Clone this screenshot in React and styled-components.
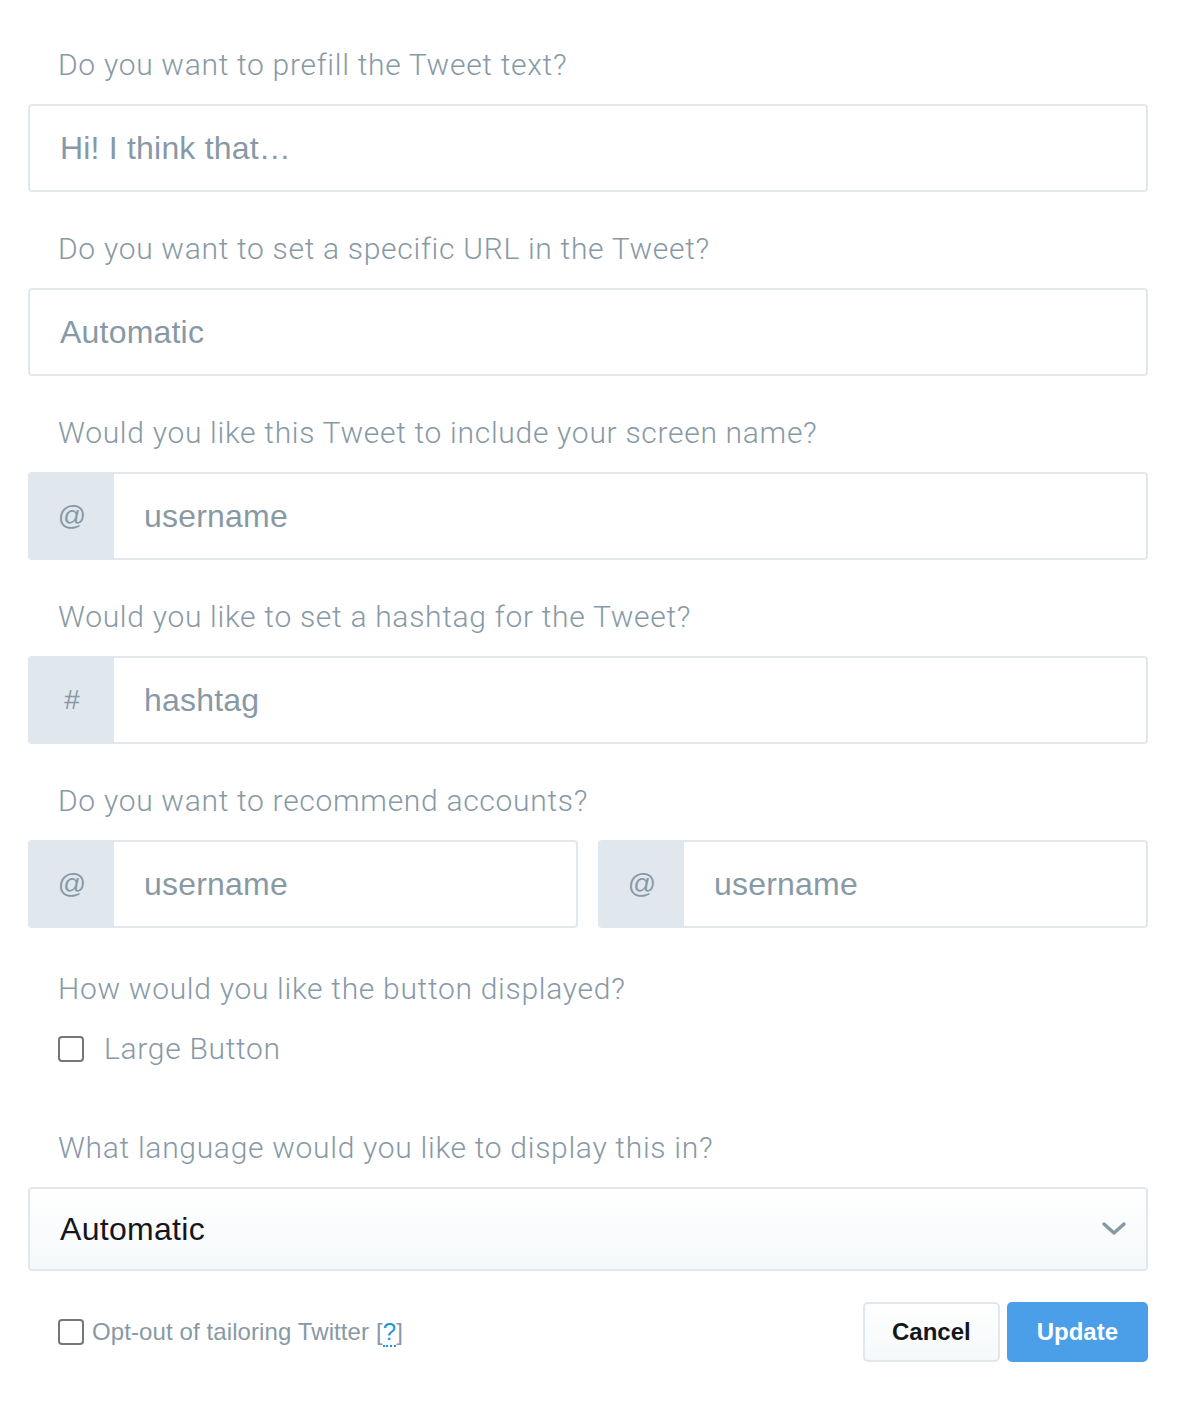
import styled, { createGlobalStyle } from "styled-components";

const GlobalStyle = createGlobalStyle`
  body {
    margin: 0;
    background: #fff;
    font-family: "Liberation Sans", Arial, sans-serif;
  }
`;

const Page = styled.div`
  width: 1120px;
  padding: 47px 28px 40px 28px;
  display: flex;
  flex-direction: column;
`;

const Section = styled.div`
  display: flex;
  flex-direction: column;
  margin-bottom: ${(p) => p.$gap ?? 39}px;
`;

const Label = styled.div`
  font-family: Roboto, "Liberation Sans", sans-serif;
  font-weight: 300;
  font-size: 30px;
  letter-spacing: 0.7px;
  line-height: 36px;
  color: #8899a6;
  padding-left: 30px;
  margin-bottom: ${(p) => p.$gap ?? 21}px;
`;

const Row = styled.div`
  display: grid;
  grid-template-columns: 1fr 1fr;
  gap: 20px;
`;

const InputBox = styled.div`
  display: flex;
  height: 88px;
  box-sizing: border-box;
  border: 2px solid #e1e8ed;
  border-radius: 4px;
  overflow: hidden;
  background: #fff;
`;

const Addon = styled.div`
  width: 84px;
  flex-shrink: 0;
  background: #e1e8ed;
  color: #8899a6;
  font-size: 28px;
  display: flex;
  align-items: center;
  justify-content: center;
`;

const Field = styled.div`
  flex: 1;
  display: flex;
  align-items: center;
  padding-left: 30px;
  font-size: 32px;
  letter-spacing: 0.2px;
  color: #8899a6;
`;

const CheckRow = styled.label`
  display: flex;
  align-items: center;
  gap: 20px;
  padding-left: 30px;
  font-family: Roboto, "Liberation Sans", sans-serif;
  font-weight: 300;
  font-size: 30px;
  letter-spacing: 0.7px;
  color: #8899a6;
`;

const Box = styled.span`
  width: 22px;
  height: 22px;
  border: 2px solid #767676;
  border-radius: 4px;
  flex-shrink: 0;
  box-sizing: content-box;
`;

const Select = styled.div`
  height: 84px;
  box-sizing: border-box;
  border: 2px solid #e1e8ed;
  border-radius: 4px;
  background: linear-gradient(#fff, #f5f8fa);
  display: flex;
  align-items: center;
  justify-content: space-between;
  padding: 0 18px 0 30px;
  font-size: 32px;
  letter-spacing: 0.3px;
  color: #14171a;
`;

const Footer = styled.div`
  display: flex;
  align-items: center;
  justify-content: space-between;
  margin-top: 31px;
`;

const OptOut = styled.div`
  display: flex;
  align-items: center;
  gap: 8px;
  padding-left: 30px;
  font-size: 24px;
  letter-spacing: 0.1px;
  color: #8899a6;
`;

const Help = styled.span`
  color: #1b95e0;
  border-bottom: 2px dotted #1b95e0;
  line-height: 24px;
`;

const Buttons = styled.div`
  display: flex;
  gap: 7px;
`;

const Button = styled.button`
  height: 60px;
  padding: 0 ${(p) => (p.$primary ? 28 : 27)}px;
  border-radius: 5px;
  font-family: "Liberation Sans", Arial, sans-serif;
  font-weight: 700;
  font-size: 24px;
  border: 2px solid ${(p) => (p.$primary ? "#4a9fe8" : "#e1e8ed")};
  background: ${(p) => (p.$primary ? "#4a9fe8" : "linear-gradient(#fff, #f5f8fa)")};
  color: ${(p) => (p.$primary ? "#fff" : "#14171a")};
`;

function Input({ addon, children }) {
  return (
    <InputBox>
      {addon && <Addon>{addon}</Addon>}
      <Field>{children}</Field>
    </InputBox>
  );
}

export default function App() {
  return (
    <Page>
      <GlobalStyle />
      <Section>
        <Label>Do you want to prefill the Tweet text?</Label>
        <Input>Hi! I think that…</Input>
      </Section>
      <Section>
        <Label>Do you want to set a specific URL in the Tweet?</Label>
        <Input>Automatic</Input>
      </Section>
      <Section>
        <Label>Would you like this Tweet to include your screen name?</Label>
        <Input addon="@">username</Input>
      </Section>
      <Section>
        <Label>Would you like to set a hashtag for the Tweet?</Label>
        <Input addon="#">hashtag</Input>
      </Section>
      <Section $gap={43}>
        <Label>Do you want to recommend accounts?</Label>
        <Row>
          <Input addon="@">username</Input>
          <Input addon="@">username</Input>
        </Row>
      </Section>
      <Section $gap={64}>
        <Label $gap={24}>How would you like the button displayed?</Label>
        <CheckRow>
          <Box />
          Large Button
        </CheckRow>
      </Section>
      <Section $gap={0}>
        <Label>What language would you like to display this in?</Label>
        <Select>
          Automatic
          <svg width="28" height="16" viewBox="0 0 28 16">
            <path d="M4 3 L14 12 L24 3" fill="none" stroke="#8899a6" strokeWidth="3.5" strokeLinecap="round" strokeLinejoin="round" />
          </svg>
        </Select>
      </Section>
      <Footer>
        <OptOut>
          <Box />
          <span>
            Opt-out of tailoring Twitter [<Help>?</Help>]
          </span>
        </OptOut>
        <Buttons>
          <Button>Cancel</Button>
          <Button $primary>Update</Button>
        </Buttons>
      </Footer>
    </Page>
  );
}
